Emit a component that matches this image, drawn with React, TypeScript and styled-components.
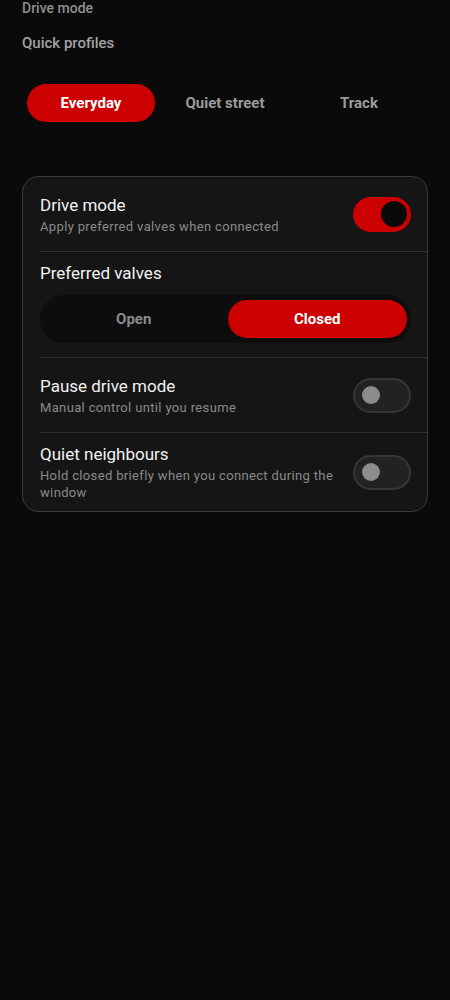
import styled, { createGlobalStyle } from "styled-components";
import { useState } from "react";

const GlobalStyle = createGlobalStyle`
  html, body {
    margin: 0;
    padding: 0;
    background: #0a0a0a;
  }
  body {
    font-family: Roboto, "Noto Sans", "Liberation Sans", sans-serif;
    color: #ffffff;
  }
`;

const Page = styled.main`
  min-height: 1000px;
  background: #0a0a0a;
  padding: 0 22px;
  box-sizing: border-box;
  display: flex;
  flex-direction: column;
`;

const PageTitle = styled.h2`
  margin: 0;
  font-size: 14px;
  line-height: 16px;
  font-weight: 500;
  color: #8f8f8f;
`;

const SectionLabel = styled.h3`
  margin: 18px 0 0;
  font-size: 15px;
  line-height: 18px;
  font-weight: 500;
  color: #a3a3a3;
`;

const Profiles = styled.div`
  margin: 29px 2px 0;
  padding: 3px;
  display: grid;
  grid-template-columns: repeat(3, 1fr);
  gap: 6px;
`;

const ProfileButton = styled.button<{ $active?: boolean }>`
  height: 38px;
  border: 0;
  border-radius: 19px;
  font-family: inherit;
  font-size: 15px;
  font-weight: 700;
  color: ${(p) => (p.$active ? "#ffffff" : "#9c9c9c")};
  background: ${(p) => (p.$active ? "#cc0000" : "transparent")};
  cursor: pointer;
`;

const Card = styled.section`
  margin-top: 51px;
  background: #151515;
  border: 1px solid #3a3a3a;
  border-radius: 16px;
  display: flex;
  flex-direction: column;
`;

const Row = styled.div`
  min-height: 74px;
  padding: 10px 16px 10px 17px;
  box-sizing: border-box;
  display: flex;
  align-items: center;
  gap: 14px;
`;

const StackRow = styled.div`
  padding: 10px 16px 14px 17px;
  display: flex;
  flex-direction: column;
  gap: 11px;
`;

const Divider = styled.div`
  height: 1px;
  margin-left: 17px;
  background: #2f2f2f;
`;

const Texts = styled.div`
  flex: 1;
  display: flex;
  flex-direction: column;
  gap: 2px;
`;

const Title = styled.div`
  font-size: 17px;
  line-height: 22px;
  color: #f2f2f2;
`;

const Subtitle = styled.div`
  font-size: 13px;
  line-height: 17px;
  letter-spacing: 0.35px;
  color: #8a8a8a;
`;

const Toggle = styled.button<{ $on: boolean }>`
  position: relative;
  flex: none;
  width: 58px;
  height: 35px;
  padding: 0;
  border-radius: 18px;
  border: 2px solid ${(p) => (p.$on ? "#cc0000" : "#363636")};
  background: ${(p) => (p.$on ? "#cc0000" : "#222222")};
  box-sizing: border-box;
  cursor: pointer;

  &::after {
    content: "";
    position: absolute;
    top: 50%;
    border-radius: 50%;
    transform: translateY(-50%);
    ${(p) =>
      p.$on
        ? "right: 2px; width: 26px; height: 26px; background: #0a0a0a;"
        : "left: 7px; width: 18px; height: 18px; background: #8c8c8c;"}
  }
`;

const Segmented = styled.div`
  height: 48px;
  padding: 5px 4px;
  box-sizing: border-box;
  border-radius: 24px;
  background: #0d0d0d;
  display: grid;
  grid-template-columns: 1fr 1fr;
  gap: 4px;
`;

const SegmentButton = styled.button<{ $active?: boolean }>`
  border: 0;
  border-radius: 20px;
  font-family: inherit;
  font-size: 15px;
  font-weight: 700;
  color: ${(p) => (p.$active ? "#ffffff" : "#8a8a8a")};
  background: ${(p) => (p.$active ? "#cc0000" : "transparent")};
  cursor: pointer;
`;

const profiles = ["Everyday", "Quiet street", "Track"];

function App() {
  const [profile, setProfile] = useState("Everyday");
  const [driveMode, setDriveMode] = useState(true);
  const [valves, setValves] = useState("Closed");
  const [paused, setPaused] = useState(false);
  const [quiet, setQuiet] = useState(false);

  return (
    <>
      <GlobalStyle />
      <Page>
        <PageTitle>Drive mode</PageTitle>
        <SectionLabel>Quick profiles</SectionLabel>
        <Profiles>
          {profiles.map((name) => (
            <ProfileButton
              key={name}
              $active={profile === name}
              onClick={() => setProfile(name)}
            >
              {name}
            </ProfileButton>
          ))}
        </Profiles>

        <Card>
          <Row>
            <Texts>
              <Title>Drive mode</Title>
              <Subtitle>Apply preferred valves when connected</Subtitle>
            </Texts>
            <Toggle $on={driveMode} onClick={() => setDriveMode(!driveMode)} />
          </Row>
          <Divider />
          <StackRow>
            <Title>Preferred valves</Title>
            <Segmented>
              {["Open", "Closed"].map((v) => (
                <SegmentButton key={v} $active={valves === v} onClick={() => setValves(v)}>
                  {v}
                </SegmentButton>
              ))}
            </Segmented>
          </StackRow>
          <Divider />
          <Row>
            <Texts>
              <Title>Pause drive mode</Title>
              <Subtitle>Manual control until you resume</Subtitle>
            </Texts>
            <Toggle $on={paused} onClick={() => setPaused(!paused)} />
          </Row>
          <Divider />
          <Row>
            <Texts>
              <Title>Quiet neighbours</Title>
              <Subtitle>Hold closed briefly when you connect during the window</Subtitle>
            </Texts>
            <Toggle $on={quiet} onClick={() => setQuiet(!quiet)} />
          </Row>
        </Card>
      </Page>
    </>
  );
}

export default App;
